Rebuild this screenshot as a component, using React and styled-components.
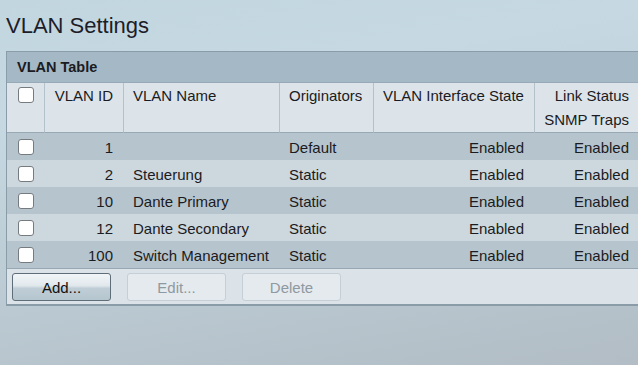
import React from 'react';
import styled, { createGlobalStyle } from 'styled-components';

const GlobalStyle = createGlobalStyle`
html, body {
  margin: 0;
  height: 365px;
  overflow: hidden;
}
body {
  font-family: "Liberation Sans", Arial, sans-serif;
  color: #1b1b22;
  background: linear-gradient(170deg, #c2d6e0 0%, #c6d9e2 25%, #bccbd4 60%, #b2bdc5 100%);
}
`

const Page = styled.div`
display: flex;
flex-direction: column;
padding: 11px 0 0 6px;
`

const Title = styled.h1`
margin: 0 0 10px;
font-size: 22px;
font-weight: 400;
line-height: 30px;
color: #1d1d29;
`

const Panel = styled.div`
box-sizing: border-box;
width: 633px;
border: 1px solid #8b9ca9;
border-right: none;
`

const PanelHeader = styled.div`
height: 30px;
line-height: 30px;
padding-left: 10px;
font-size: 14.5px;
font-weight: 700;
background: #a4b8c6;
border-bottom: 1px solid #98aab7;
`

const Grid = styled.div`
display: grid;
grid-template-columns: 37px 79px 156px 94px 161px 1fr;
`

const HeadCell = styled.div`
box-sizing: border-box;
height: 50px;
padding: 1px 10px 0 9px;
font-size: 15px;
line-height: 24px;
white-space: nowrap;
background: #dce4ea;
border-bottom: 1px solid #98a9b5;
text-align: ${p => p.$right ? 'right' : 'left'};
${p => p.$first ? 'display: flex; justify-content: center; padding: 4px 0 0;' : 'border-left: 1px solid #b3c1cb;'}
`

const Cell = styled.div`
box-sizing: border-box;
height: 27px;
display: flex;
align-items: center;
justify-content: ${p => p.$center ? 'center' : p.$right ? 'flex-end' : 'flex-start'};
padding: 1px ${p => p.$right ? '10px' : '0'} 0 ${p => p.$right || p.$center ? '0' : '10px'};
font-size: 15px;
background: ${p => p.$odd ? '#cdd7de' : '#b6c4cd'};
white-space: nowrap;
`

const Check = styled.span`
box-sizing: border-box;
display: block;
width: 16px;
height: 16px;
background: #ffffff;
border: 1px solid #767b80;
border-radius: 3px;
`

const Toolbar = styled.div`
display: flex;
gap: 16px;
height: 37px;
box-sizing: border-box;
padding: 4px 0 0 5px;
background: #dbe3e9;
border-top: 1px solid #97a8b4;
border-bottom: 1px solid #8b9ca9;
`

const Button = styled.button`
box-sizing: border-box;
width: 99px;
height: 28px;
padding: 0;
font-family: "Liberation Sans", Arial, sans-serif;
font-size: 15px;
border-radius: 3px;
color: ${p => p.disabled ? '#8f99a1' : '#111'};
border: 1px solid ${p => p.disabled ? '#c5cfd5' : '#5f6d78'};
background: ${p => p.disabled
    ? '#e4eaee'
    : 'linear-gradient(#f1f5f7 0%, #e1e8ec 45%, #bfcdd6 55%, #b5c6d0 100%)'};
`

const vlans = [
    { id: 1, name: '', origin: 'Default' },
    { id: 2, name: 'Steuerung', origin: 'Static' },
    { id: 10, name: 'Dante Primary', origin: 'Static' },
    { id: 12, name: 'Dante Secondary', origin: 'Static' },
    { id: 100, name: 'Switch Management', origin: 'Static' },
];

const App = () => {
    return (
        <Page>
            <GlobalStyle />
            <Title>VLAN Settings</Title>
            <Panel>
                <PanelHeader>VLAN Table</PanelHeader>
                <Grid>
                    <HeadCell $first><Check /></HeadCell>
                    <HeadCell $right>VLAN ID</HeadCell>
                    <HeadCell>VLAN Name</HeadCell>
                    <HeadCell>Originators</HeadCell>
                    <HeadCell>VLAN Interface State</HeadCell>
                    <HeadCell $right>Link Status<br />SNMP Traps</HeadCell>

                    {vlans.map((v, i) => (
                        <React.Fragment key={v.id}>
                            <Cell $odd={i % 2 === 1} $center><Check /></Cell>
                            <Cell $odd={i % 2 === 1} $right>{v.id}</Cell>
                            <Cell $odd={i % 2 === 1}>{v.name}</Cell>
                            <Cell $odd={i % 2 === 1}>{v.origin}</Cell>
                            <Cell $odd={i % 2 === 1} $right>Enabled</Cell>
                            <Cell $odd={i % 2 === 1} $right>Enabled</Cell>
                        </React.Fragment>
                    ))}
                </Grid>
                <Toolbar>
                    <Button>Add...</Button>
                    <Button disabled>Edit...</Button>
                    <Button disabled>Delete</Button>
                </Toolbar>
            </Panel>
        </Page>
    );
};

export default App;
